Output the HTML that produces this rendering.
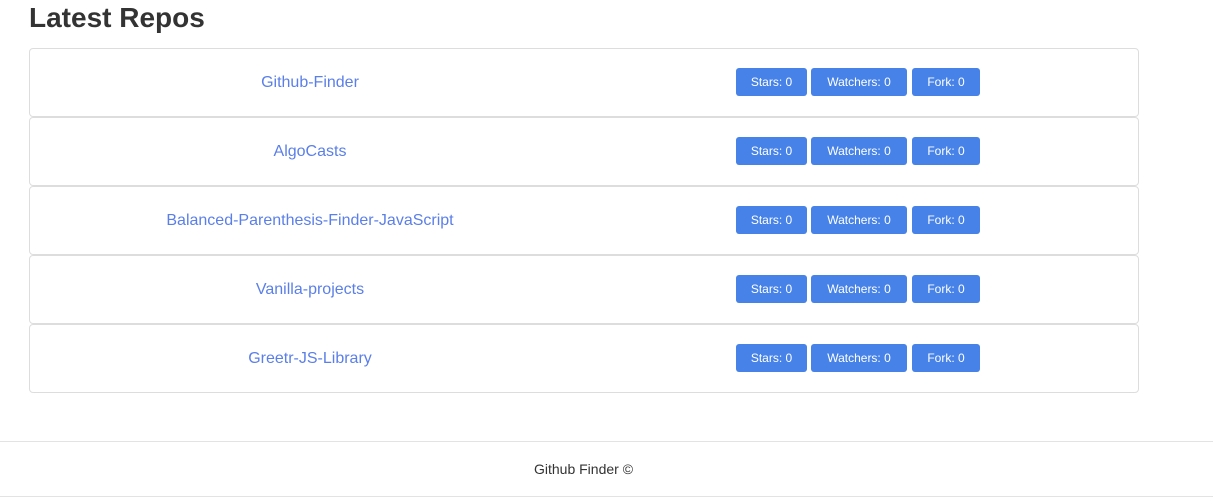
<!DOCTYPE html>
<html><head><meta charset="utf-8"><style>
*{box-sizing:border-box;margin:0;padding:0}
body{width:1213px;height:497px;background:#fff;font-family:"Liberation Sans",sans-serif;color:#333;position:relative;overflow:hidden}
h1{position:absolute;left:29px;top:0;font-size:28px;font-weight:bold;color:#333;line-height:36px}
.card{position:absolute;left:29px;width:1110px;height:69px;border:1px solid #ddd;border-radius:4px}
.name{position:absolute;left:0;width:560px;top:0;height:67px;line-height:67px;text-align:center;color:#5b7fe8;font-size:16px}
.b{position:absolute;top:19px;height:28px;line-height:28px;background:#4682e8;color:#fff;font-size:12px;text-align:center;border-radius:3px}
.s{left:706px;width:71px}.w{left:781px;width:96px}.f{left:882px;width:68px}
.foot{position:absolute;left:0;width:1213px;top:441px;height:56px;border-top:1px solid #e3e3e3;border-bottom:1px solid #e3e3e3;text-align:center;line-height:54px;font-size:14px;color:#333;padding-right:46px}
</style></head><body>
<h1>Latest Repos</h1>
<div class="card" style="top:48px"><div class="name">Github-Finder</div><div class="b s">Stars: 0</div><div class="b w">Watchers: 0</div><div class="b f">Fork: 0</div></div>
<div class="card" style="top:117px"><div class="name">AlgoCasts</div><div class="b s">Stars: 0</div><div class="b w">Watchers: 0</div><div class="b f">Fork: 0</div></div>
<div class="card" style="top:186px"><div class="name">Balanced-Parenthesis-Finder-JavaScript</div><div class="b s">Stars: 0</div><div class="b w">Watchers: 0</div><div class="b f">Fork: 0</div></div>
<div class="card" style="top:255px"><div class="name">Vanilla-projects</div><div class="b s">Stars: 0</div><div class="b w">Watchers: 0</div><div class="b f">Fork: 0</div></div>
<div class="card" style="top:324px"><div class="name">Greetr-JS-Library</div><div class="b s">Stars: 0</div><div class="b w">Watchers: 0</div><div class="b f">Fork: 0</div></div>
<div class="foot">Github Finder ©</div>
</body></html>
